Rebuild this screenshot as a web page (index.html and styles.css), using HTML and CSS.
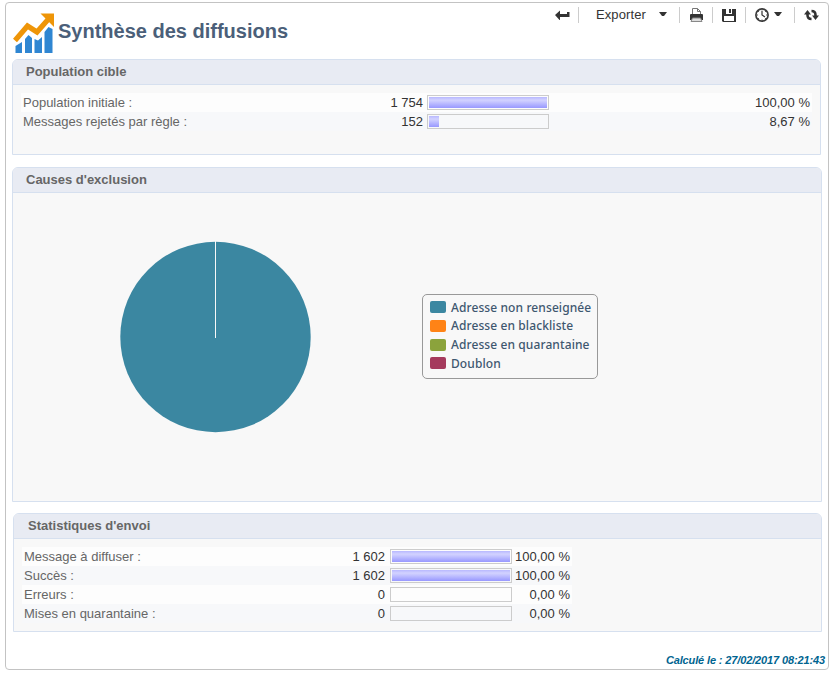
FILE: index.html
```html
<!DOCTYPE html>
<html lang="fr">
<head>
<meta charset="utf-8">
<title>Synthèse des diffusions</title>
<link rel="stylesheet" href="styles.css">
</head>
<body>
<main class="frame">
  <header class="top">
    <svg class="logo" width="42" height="43" viewBox="0 0 42 43">
      <path d="M2.500 34l6.500-4v11H2.500zM12 27l3.500-4 3.500 3v15h-7zM21.500 27l3.500 1.500 4-3.500v16h-7.500zM31.500 20l4-5 4 2v24h-8z" fill="#2f86d2"/>
      <path d="M2 28.500L14.500 14L24 20L35.500 7" fill="none" stroke="#ee9508" stroke-width="5.200"/>
      <path d="M27.500 1.500H41V15z" fill="#ee9508"/>
    </svg>
    <h1 class="title">Synthèse des diffusions</h1>
    <nav class="toolbar">
      <svg class="back" width="15" height="11" viewBox="0 0 15 11"><path d="M0 6L5 1.500V5h7V3h2.500v5H5v3.500z" fill="#333"/></svg>
      <i class="sep s1"></i>
      <span class="export">Exporter</span>
      <svg class="caret c1" width="8" height="5" viewBox="0 0 8 5"><path d="M0 0h8L5 4H3z" fill="#333"/></svg>
      <i class="sep s2"></i>
      <svg class="printer" width="13" height="14" viewBox="0 0 13 14"><path d="M2.500 7V.5h5l3 3V7" fill="#fff" stroke="#777"/><path d="M7.500.5v3h3" fill="none" stroke="#777"/><path d="M0 7q0-1 1-1h11q1 0 1 1v5H0z" fill="#333"/><path d="M2.500 10h8l1.500 3.500H1z" fill="#ddd" stroke="#888"/></svg>
      <i class="sep s2"></i>
      <svg class="floppy" width="14" height="13" viewBox="0 0 14 13"><path d="M0 0h14v13H1l-1-1z" fill="#333"/><path d="M4 0h6v5H4zM2 7h10v5H2z" fill="#fff"/><path d="M7 0h2v4H7z" fill="#333"/></svg>
      <i class="sep s2"></i>
      <svg class="clock" width="14" height="14" viewBox="0 0 14 14"><circle cx="7" cy="7" r="6.100" fill="#fff" stroke="#3a3a3a" stroke-width="1.700"/><path d="M7 3v4l3 2" fill="none" stroke="#333" stroke-width="1.200"/><path d="M7 1.500v1M7 11.500v1M1.500 7h1.500M11 7h1.500M3 3l1 1M10 10l1 1M11 3l-1 1M3 11l1-1" stroke="#555"/></svg>
      <svg class="caret c2" width="8" height="5" viewBox="0 0 8 5"><path d="M0 0h8L5 4H3z" fill="#333"/></svg>
      <i class="sep s3"></i>
      <svg class="refresh" width="15" height="12" viewBox="0 0 15 12"><path d="M3.500 4v2q0 4 4 4M11.500 8V6q0-4-4-4" fill="none" stroke="#333" stroke-width="2.600"/><path d="M0 5.500L3.500 1 7 5.500zM8 6.500l3.500 4.500L15 6.500z" fill="#333"/></svg>
    </nav>
  </header>

  <section class="panel population">
    <h2 class="panel-title">Population cible</h2>
    <div class="rows">
      <div class="row"><span class="label">Population initiale :</span><span class="num">1 754</span><span class="bar"><i style="width:118px"></i></span><span class="pct">100,00 %</span></div>
      <div class="row"><span class="label">Messages rejetés par règle :</span><span class="num">152</span><span class="bar"><i style="width:10px"></i></span><span class="pct">8,67 %</span></div>
    </div>
  </section>

  <section class="panel causes">
    <h2 class="panel-title">Causes d'exclusion</h2>
    <div class="chart">
      <svg class="pie" width="192" height="192" viewBox="0 0 192 192"><circle cx="95.500" cy="96" r="95.200" fill="#3b87a1"/><path d="M95.500 0v97" stroke="#f8f8f8"/></svg>
      <ul class="legend">
        <li><i class="teal"></i><span>Adresse non renseignée</span></li>
        <li><i class="orange"></i><span>Adresse en blackliste</span></li>
        <li><i class="green"></i><span>Adresse en quarantaine</span></li>
        <li><i class="plum"></i><span>Doublon</span></li>
      </ul>
    </div>
  </section>

  <section class="panel stats">
    <h2 class="panel-title">Statistiques d'envoi</h2>
    <div class="rows">
      <div class="row"><span class="label">Message à diffuser :</span><span class="num">1 602</span><span class="bar"><i style="width:118px"></i></span><span class="pct">100,00 %</span></div>
      <div class="row"><span class="label">Succès :</span><span class="num">1 602</span><span class="bar"><i style="width:118px"></i></span><span class="pct">100,00 %</span></div>
      <div class="row"><span class="label">Erreurs :</span><span class="num">0</span><span class="bar"></span><span class="pct">0,00 %</span></div>
      <div class="row"><span class="label">Mises en quarantaine :</span><span class="num">0</span><span class="bar"></span><span class="pct">0,00 %</span></div>
    </div>
  </section>

  <footer class="computed">Calculé le : 27/02/2017 08:21:43</footer>
</main>
</body>
</html>
```
FILE: styles.css
```css
* { box-sizing: border-box; }
body { margin: 0; background: #fff; font-family: "Liberation Sans", Arial, sans-serif; overflow: hidden; }
.frame { width: 824px; height: 668px; margin: 2px 0 0 5px; border: 1px solid #c3c3c3; border-radius: 4px; padding: 0 6px; display: flex; flex-direction: column; }
svg { display: block; flex: none; }
.top { display: flex; height: 56px; flex: none; align-items: flex-start; }
.logo { margin: 9px 0 0 1px; }
.title { margin: 16px 0 0 3px; width: 240px; font-size: 20px; line-height: 24px; color: #4b5f79; white-space: nowrap; }
.toolbar { display: flex; align-items: center; height: 24px; margin-left: 257px; flex: none; }
.back { margin-top: -1px; }
.sep { width: 1px; height: 16px; background: #ccc; }
.s1 { margin: 0 17px 0 8px; }
.s2 { margin: 0 10px 0 9px; }
.s3 { margin: 0 9px 0 12px; }
.export { font-size: 13px; width: 51px; letter-spacing: .1px; color: #333; white-space: nowrap; margin-top: -1px; }
.c1 { margin: -2px 3px 0 12px; }
.c2 { margin: -1px 0 0 5px; }
.floppy { margin: 0 -1px 0 -1px; }
.floppy + .sep { margin-left: 10px; margin-right: 9px; }
.clock { margin-top: -1px; }
.refresh { margin-top: -1px; }
.panel { flex: none; border: 1px solid #d6e0ef; border-radius: 6px 6px 0 0; background: #f8f8f8; }
.population { width: 809px; height: 96px; }
.causes { width: 810px; height: 335px; margin-top: 12px; }
.stats { width: 809px; height: 119px; margin: 11px 0 0 1px; }
.panel-title { margin: 0; height: 25px; border-bottom: 1px solid #d6e0ef; border-radius: 5px 5px 0 0; background: #e8ebf3; padding-left: 13px; font-size: 13px; line-height: 24px; color: #666; }
.stats .panel-title { padding-left: 14px; }
.rows { padding: 8px; }
.row { display: flex; align-items: center; height: 19px; background: #fdfdfd; }
.row:nth-child(even) { background: #f7f8fa; }
.label { flex: none; padding-left: 2px; font-size: 13px; line-height: 19px; color: #666; }
.num, .pct { flex: none; text-align: right; font-size: 13px; line-height: 19px; color: #333; white-space: nowrap; }
.population .label { width: 340px; }
.population .num { width: 62px; }
.population .pct { margin-left: auto; padding-right: 2px; }
.stats .rows { width: 566px; }
.stats .label { width: 300px; }
.stats .num { width: 63px; }
.stats .pct { width: 60px; padding-right: 2px; }
.bar { flex: none; width: 122px; height: 15px; margin-left: 4px; padding: 1px; border: 1px solid #ccc; }
.stats .bar { margin-left: 5px; }
.bar i { display: block; height: 11px; background: linear-gradient(#b8b8ff 0%, #d2d2ff 28%, #c8c8ff 42%, #9898ff 100%); }
.chart { display: flex; align-items: flex-start; }
.pie { margin: 48px 0 0 107px; }
.legend { list-style: none; margin: 101px 0 0 110px; width: 176px; height: 85px; padding: 3px 7px; border: 1px solid #999; border-radius: 5px; }
.legend li { display: flex; align-items: center; height: 18.670px; font: 500 12px "Noto Sans", sans-serif; letter-spacing: .1px; color: #3e576f; white-space: nowrap; }
.legend i { flex: none; width: 16px; height: 12px; border-radius: 2px; margin-right: 5px; }
.teal { background: #3b87a1; }
.orange { background: #ff8316; }
.green { background: #8ba33c; }
.plum { background: #a53a5d; }
.computed { margin: 20px -3px 0 0; text-align: right; font: italic bold 11px/16px "Liberation Sans", Arial, sans-serif; letter-spacing: -.13px; color: #006490; }
```
